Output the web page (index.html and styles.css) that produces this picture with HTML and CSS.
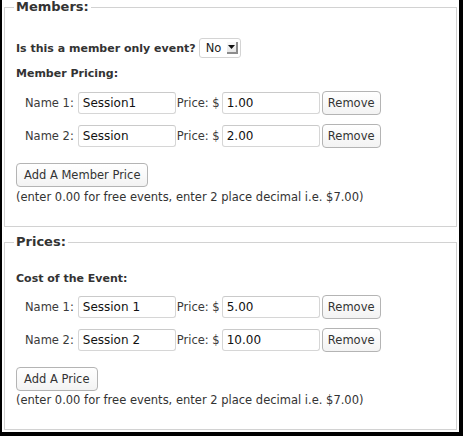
FILE: index.html
```html
<!DOCTYPE html>
<html>
<head>
<meta charset="utf-8">
<link rel="stylesheet" href="styles.css">
</head>
<body>
<div class="frame">
  <fieldset class="box box-members">
    <legend>Members:</legend>
    <div class="question">
      <span class="strong">Is this a member only event?</span>
      <span class="select">
        <span class="select-value">No</span>
        <span class="select-arrow"><svg width="7" height="4" viewBox="0 0 7 4"><path d="M0 0H7L3.5 4Z" fill="#111"/></svg></span>
      </span>
    </div>
    <div class="section-label strong">Member Pricing:</div>
    <div class="row">
      <span class="row-label">Name 1:</span>
      <span class="input">Session1</span>
      <span class="price-label">Price: $</span>
      <span class="input">1.00</span>
      <span class="btn btn-remove">Remove</span>
    </div>
    <div class="row">
      <span class="row-label">Name 2:</span>
      <span class="input">Session</span>
      <span class="price-label">Price: $</span>
      <span class="input">2.00</span>
      <span class="btn btn-remove">Remove</span>
    </div>
    <div class="add"><span class="btn">Add A Member Price</span></div>
    <div class="note">(enter 0.00 for free events, enter 2 place decimal i.e. $7.00)</div>
  </fieldset>

  <fieldset class="box box-prices">
    <legend>Prices:</legend>
    <div class="section-label strong first">Cost of the Event:</div>
    <div class="row">
      <span class="row-label">Name 1:</span>
      <span class="input">Session 1</span>
      <span class="price-label">Price: $</span>
      <span class="input">5.00</span>
      <span class="btn btn-remove">Remove</span>
    </div>
    <div class="row">
      <span class="row-label">Name 2:</span>
      <span class="input">Session 2</span>
      <span class="price-label">Price: $</span>
      <span class="input">10.00</span>
      <span class="btn btn-remove">Remove</span>
    </div>
    <div class="add"><span class="btn">Add A Price</span></div>
    <div class="note">(enter 0.00 for free events, enter 2 place decimal i.e. $7.00)</div>
  </fieldset>
</div>
</body>
</html>
```
FILE: styles.css
```css
html, body {
  margin: 0;
  padding: 0;
  background: #000;
}
body {
  width: 463px;
  height: 436px;
  overflow: hidden;
  font-family: "DejaVu Sans", sans-serif;
  font-size: 11.5px;
  color: #333;
}
.frame {
  margin-left: 2px;
  width: 457px;
  height: 432px;
  background: #fff;
  overflow: hidden;
}
.box {
  margin: 0 2px 0 2px;
  padding: 0 0 21px 11px;
  border: 1px solid #d2d2d2;
  min-width: 0;
}
.box-members {
  margin-top: -1px;
}
.box-prices {
  margin-top: 7px;
}
legend {
  margin-left: -2px;
  padding: 0 2px;
  font-weight: bold;
  font-size: 13px;
  line-height: 16px;
  color: #333;
}
.strong {
  font-weight: bold;
  font-size: 11px;
}
.question {
  display: flex;
  align-items: center;
  height: 20px;
  margin-top: 23px;
}
.select {
  display: flex;
  align-items: center;
  box-sizing: border-box;
  width: 42px;
  height: 20px;
  margin-left: 3px;
  border: 1px solid #d4d4d4;
  border-radius: 3px;
  background: #fff;
}
.select-value {
  margin-left: 6px;
  font-size: 11.5px;
  color: #222;
}
.select-arrow {
  display: flex;
  align-items: center;
  justify-content: center;
  box-sizing: border-box;
  width: 11px;
  height: 12px;
  margin-left: 6px;
  background: linear-gradient(#fafafa, #e6e6e6);
  border-right: 2px solid #8c8c8c;
  border-bottom: 2px solid #8c8c8c;
}
.section-label {
  line-height: 16px;
  margin-top: 8px;
}
.section-label.first {
  margin-top: 21px;
}
.row {
  display: flex;
  align-items: center;
  height: 24px;
  margin-top: 9px;
  padding-left: 9px;
}
.section-label + .row {
  margin-top: 9px;
}
.box-prices .section-label + .row {
  margin-top: 8px;
}
.row-label {
  color: #3a3a3a;
  margin-right: 4px;
}
.input {
  display: flex;
  align-items: center;
  box-sizing: border-box;
  width: 98px;
  height: 22px;
  padding-left: 4px;
  border: 1px solid #d6d6d6;
  border-top-color: #cacaca;
  border-radius: 3px;
  background: #fff;
  color: #111;
  font-size: 12px;
}
.price-label {
  margin-left: 1px;
  margin-right: 2px;
  color: #3a3a3a;
}
.btn {
  display: inline-flex;
  align-items: center;
  justify-content: center;
  box-sizing: border-box;
  height: 24px;
  padding: 0 7px;
  border: 1px solid #b4b4b4;
  border-radius: 4px;
  background: linear-gradient(#ffffff, #f3f3f3);
  color: #333;
  font-size: 11.5px;
}
.btn-remove {
  width: 59px;
  margin-left: 2px;
}
.add {
  display: flex;
  margin-top: 15px;
}
.note {
  line-height: 16px;
  margin-top: 2px;
  white-space: nowrap;
}
.box-prices .note {
  margin-top: 1px;
}
```
